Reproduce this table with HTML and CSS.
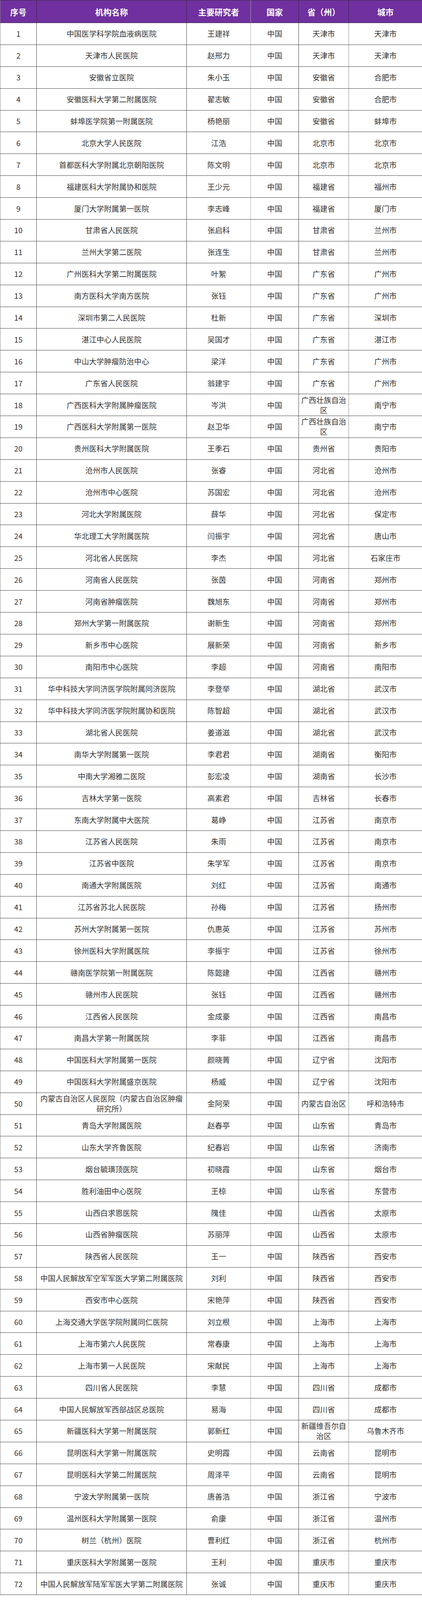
FILE: index.html
```html
<!DOCTYPE html>
<html lang="zh-CN">
<head>
<meta charset="utf-8">
<title>研究中心列表</title>
<link rel="stylesheet" href="styles.css">
</head>
<body>
<table class="sites">
<colgroup>
<col class="c-no"><col class="c-name"><col class="c-pi"><col class="c-country"><col class="c-prov"><col class="c-city">
</colgroup>
<thead>
<tr><th>序号</th><th>机构名称</th><th>主要研究者</th><th>国家</th><th>省（州）</th><th>城市</th></tr>
</thead>
<tbody>
<tr><td>1</td><td>中国医学科学院血液病医院</td><td>王建祥</td><td>中国</td><td>天津市</td><td>天津市</td></tr>
<tr><td>2</td><td>天津市人民医院</td><td>赵邢力</td><td>中国</td><td>天津市</td><td>天津市</td></tr>
<tr><td>3</td><td>安徽省立医院</td><td>朱小玉</td><td>中国</td><td>安徽省</td><td>合肥市</td></tr>
<tr><td>4</td><td>安徽医科大学第二附属医院</td><td>翟志敏</td><td>中国</td><td>安徽省</td><td>合肥市</td></tr>
<tr><td>5</td><td>蚌埠医学院第一附属医院</td><td>杨艳丽</td><td>中国</td><td>安徽省</td><td>蚌埠市</td></tr>
<tr><td>6</td><td>北京大学人民医院</td><td>江浩</td><td>中国</td><td>北京市</td><td>北京市</td></tr>
<tr><td>7</td><td>首都医科大学附属北京朝阳医院</td><td>陈文明</td><td>中国</td><td>北京市</td><td>北京市</td></tr>
<tr><td>8</td><td>福建医科大学附属协和医院</td><td>王少元</td><td>中国</td><td>福建省</td><td>福州市</td></tr>
<tr><td>9</td><td>厦门大学附属第一医院</td><td>李志峰</td><td>中国</td><td>福建省</td><td>厦门市</td></tr>
<tr><td>10</td><td>甘肃省人民医院</td><td>张启科</td><td>中国</td><td>甘肃省</td><td>兰州市</td></tr>
<tr><td>11</td><td>兰州大学第二医院</td><td>张连生</td><td>中国</td><td>甘肃省</td><td>兰州市</td></tr>
<tr><td>12</td><td>广州医科大学第二附属医院</td><td>叶絮</td><td>中国</td><td>广东省</td><td>广州市</td></tr>
<tr><td>13</td><td>南方医科大学南方医院</td><td>张钰</td><td>中国</td><td>广东省</td><td>广州市</td></tr>
<tr><td>14</td><td>深圳市第二人民医院</td><td>杜新</td><td>中国</td><td>广东省</td><td>深圳市</td></tr>
<tr><td>15</td><td>湛江中心人民医院</td><td>吴国才</td><td>中国</td><td>广东省</td><td>湛江市</td></tr>
<tr><td>16</td><td>中山大学肿瘤防治中心</td><td>梁洋</td><td>中国</td><td>广东省</td><td>广州市</td></tr>
<tr><td>17</td><td>广东省人民医院</td><td>翁建宇</td><td>中国</td><td>广东省</td><td>广州市</td></tr>
<tr><td>18</td><td>广西医科大学附属肿瘤医院</td><td>岑洪</td><td>中国</td><td>广西壮族自治区</td><td>南宁市</td></tr>
<tr><td>19</td><td>广西医科大学附属第一医院</td><td>赵卫华</td><td>中国</td><td>广西壮族自治区</td><td>南宁市</td></tr>
<tr><td>20</td><td>贵州医科大学附属医院</td><td>王季石</td><td>中国</td><td>贵州省</td><td>贵阳市</td></tr>
<tr><td>21</td><td>沧州市人民医院</td><td>张睿</td><td>中国</td><td>河北省</td><td>沧州市</td></tr>
<tr><td>22</td><td>沧州市中心医院</td><td>苏国宏</td><td>中国</td><td>河北省</td><td>沧州市</td></tr>
<tr><td>23</td><td>河北大学附属医院</td><td>薛华</td><td>中国</td><td>河北省</td><td>保定市</td></tr>
<tr><td>24</td><td>华北理工大学附属医院</td><td>闫振宇</td><td>中国</td><td>河北省</td><td>唐山市</td></tr>
<tr><td>25</td><td>河北省人民医院</td><td>李杰</td><td>中国</td><td>河北省</td><td>石家庄市</td></tr>
<tr><td>26</td><td>河南省人民医院</td><td>张茵</td><td>中国</td><td>河南省</td><td>郑州市</td></tr>
<tr><td>27</td><td>河南省肿瘤医院</td><td>魏旭东</td><td>中国</td><td>河南省</td><td>郑州市</td></tr>
<tr><td>28</td><td>郑州大学第一附属医院</td><td>谢新生</td><td>中国</td><td>河南省</td><td>郑州市</td></tr>
<tr><td>29</td><td>新乡市中心医院</td><td>展新荣</td><td>中国</td><td>河南省</td><td>新乡市</td></tr>
<tr><td>30</td><td>南阳市中心医院</td><td>李超</td><td>中国</td><td>河南省</td><td>南阳市</td></tr>
<tr><td>31</td><td>华中科技大学同济医学院附属同济医院</td><td>李登举</td><td>中国</td><td>湖北省</td><td>武汉市</td></tr>
<tr><td>32</td><td>华中科技大学同济医学院附属协和医院</td><td>陈智超</td><td>中国</td><td>湖北省</td><td>武汉市</td></tr>
<tr><td>33</td><td>湖北省人民医院</td><td>姜道滋</td><td>中国</td><td>湖北省</td><td>武汉市</td></tr>
<tr><td>34</td><td>南华大学附属第一医院</td><td>李君君</td><td>中国</td><td>湖南省</td><td>衡阳市</td></tr>
<tr><td>35</td><td>中南大学湘雅二医院</td><td>彭宏凌</td><td>中国</td><td>湖南省</td><td>长沙市</td></tr>
<tr><td>36</td><td>吉林大学第一医院</td><td>高素君</td><td>中国</td><td>吉林省</td><td>长春市</td></tr>
<tr><td>37</td><td>东南大学附属中大医院</td><td>葛峥</td><td>中国</td><td>江苏省</td><td>南京市</td></tr>
<tr><td>38</td><td>江苏省人民医院</td><td>朱雨</td><td>中国</td><td>江苏省</td><td>南京市</td></tr>
<tr><td>39</td><td>江苏省中医院</td><td>朱学军</td><td>中国</td><td>江苏省</td><td>南京市</td></tr>
<tr><td>40</td><td>南通大学附属医院</td><td>刘红</td><td>中国</td><td>江苏省</td><td>南通市</td></tr>
<tr><td>41</td><td>江苏省苏北人民医院</td><td>孙梅</td><td>中国</td><td>江苏省</td><td>扬州市</td></tr>
<tr><td>42</td><td>苏州大学附属第一医院</td><td>仇惠英</td><td>中国</td><td>江苏省</td><td>苏州市</td></tr>
<tr><td>43</td><td>徐州医科大学附属医院</td><td>李振宇</td><td>中国</td><td>江苏省</td><td>徐州市</td></tr>
<tr><td>44</td><td>赣南医学院第一附属医院</td><td>陈懿建</td><td>中国</td><td>江西省</td><td>赣州市</td></tr>
<tr><td>45</td><td>赣州市人民医院</td><td>张钰</td><td>中国</td><td>江西省</td><td>赣州市</td></tr>
<tr><td>46</td><td>江西省人民医院</td><td>金成豪</td><td>中国</td><td>江西省</td><td>南昌市</td></tr>
<tr><td>47</td><td>南昌大学第一附属医院</td><td>李菲</td><td>中国</td><td>江西省</td><td>南昌市</td></tr>
<tr><td>48</td><td>中国医科大学附属第一医院</td><td>颜晓菁</td><td>中国</td><td>辽宁省</td><td>沈阳市</td></tr>
<tr><td>49</td><td>中国医科大学附属盛京医院</td><td>杨威</td><td>中国</td><td>辽宁省</td><td>沈阳市</td></tr>
<tr><td>50</td><td>内蒙古自治区人民医院（内蒙古自治区肿瘤研究所）</td><td>金阿荣</td><td>中国</td><td>内蒙古自治区</td><td>呼和浩特市</td></tr>
<tr><td>51</td><td>青岛大学附属医院</td><td>赵春亭</td><td>中国</td><td>山东省</td><td>青岛市</td></tr>
<tr><td>52</td><td>山东大学齐鲁医院</td><td>纪春岩</td><td>中国</td><td>山东省</td><td>济南市</td></tr>
<tr><td>53</td><td>烟台毓璜顶医院</td><td>初晓霞</td><td>中国</td><td>山东省</td><td>烟台市</td></tr>
<tr><td>54</td><td>胜利油田中心医院</td><td>王椋</td><td>中国</td><td>山东省</td><td>东营市</td></tr>
<tr><td>55</td><td>山西白求恩医院</td><td>隗佳</td><td>中国</td><td>山西省</td><td>太原市</td></tr>
<tr><td>56</td><td>山西省肿瘤医院</td><td>苏丽萍</td><td>中国</td><td>山西省</td><td>太原市</td></tr>
<tr><td>57</td><td>陕西省人民医院</td><td>王一</td><td>中国</td><td>陕西省</td><td>西安市</td></tr>
<tr><td>58</td><td>中国人民解放军空军军医大学第二附属医院</td><td>刘利</td><td>中国</td><td>陕西省</td><td>西安市</td></tr>
<tr><td>59</td><td>西安市中心医院</td><td>宋艳萍</td><td>中国</td><td>陕西省</td><td>西安市</td></tr>
<tr><td>60</td><td>上海交通大学医学院附属同仁医院</td><td>刘立根</td><td>中国</td><td>上海市</td><td>上海市</td></tr>
<tr><td>61</td><td>上海市第六人民医院</td><td>常春康</td><td>中国</td><td>上海市</td><td>上海市</td></tr>
<tr><td>62</td><td>上海市第一人民医院</td><td>宋献民</td><td>中国</td><td>上海市</td><td>上海市</td></tr>
<tr><td>63</td><td>四川省人民医院</td><td>李慧</td><td>中国</td><td>四川省</td><td>成都市</td></tr>
<tr><td>64</td><td>中国人民解放军西部战区总医院</td><td>易海</td><td>中国</td><td>四川省</td><td>成都市</td></tr>
<tr><td>65</td><td>新疆医科大学第一附属医院</td><td>郭新红</td><td>中国</td><td>新疆维吾尔自治区</td><td>乌鲁木齐市</td></tr>
<tr><td>66</td><td>昆明医科大学第一附属医院</td><td>史明霞</td><td>中国</td><td>云南省</td><td>昆明市</td></tr>
<tr><td>67</td><td>昆明医科大学第二附属医院</td><td>周泽平</td><td>中国</td><td>云南省</td><td>昆明市</td></tr>
<tr><td>68</td><td>宁波大学附属第一医院</td><td>唐善浩</td><td>中国</td><td>浙江省</td><td>宁波市</td></tr>
<tr><td>69</td><td>温州医科大学附属第一医院</td><td>俞康</td><td>中国</td><td>浙江省</td><td>温州市</td></tr>
<tr><td>70</td><td>树兰（杭州）医院</td><td>曹利红</td><td>中国</td><td>浙江省</td><td>杭州市</td></tr>
<tr><td>71</td><td>重庆医科大学附属第一医院</td><td>王利</td><td>中国</td><td>重庆市</td><td>重庆市</td></tr>
<tr><td>72</td><td>中国人民解放军陆军军医大学第二附属医院</td><td>张诚</td><td>中国</td><td>重庆市</td><td>重庆市</td></tr>
</tbody>
</table>
</body>
</html>
```

FILE: styles.css
```css
html, body {
  margin: 0;
  padding: 0;
  background: #ffffff;
}

body {
  font-family: "Noto Sans CJK SC", "Noto Sans", sans-serif;
  color: #333333;
}

.sites {
  width: 1080px;
  table-layout: fixed;
  border-collapse: collapse;
  border-top: 1px solid #9a9a9a;
}

.c-no { width: 93px; }
.c-name { width: 384px; }
.c-pi { width: 164px; }
.c-country { width: 123px; }
.c-prov { width: 128px; }
.c-city { width: 188px; }

.sites thead tr {
  height: 58px;
}

.sites tbody tr {
  height: 55.9px;
}

.sites th {
  background: #7030a0;
  color: #ffffff;
  font-size: 21px;
  font-weight: 700;
  text-align: center;
  vertical-align: middle;
  border: 1px solid #3a2a45;
  padding: 0 4px;
  line-height: 26px;
}

.sites td {
  font-size: 19.2px;
  line-height: 26px;
  text-align: center;
  vertical-align: middle;
  border: 1px solid #454545;
  padding: 0 5px;
}

.sites th:nth-child(3),
.sites td:nth-child(3) {
  border-right-color: #a8a8a8;
}

.sites td:nth-child(5) {
  border-right-color: #8c8c8c;
}

.sites tr > :first-child {
  border-left-color: #8a8a8a;
}
```
